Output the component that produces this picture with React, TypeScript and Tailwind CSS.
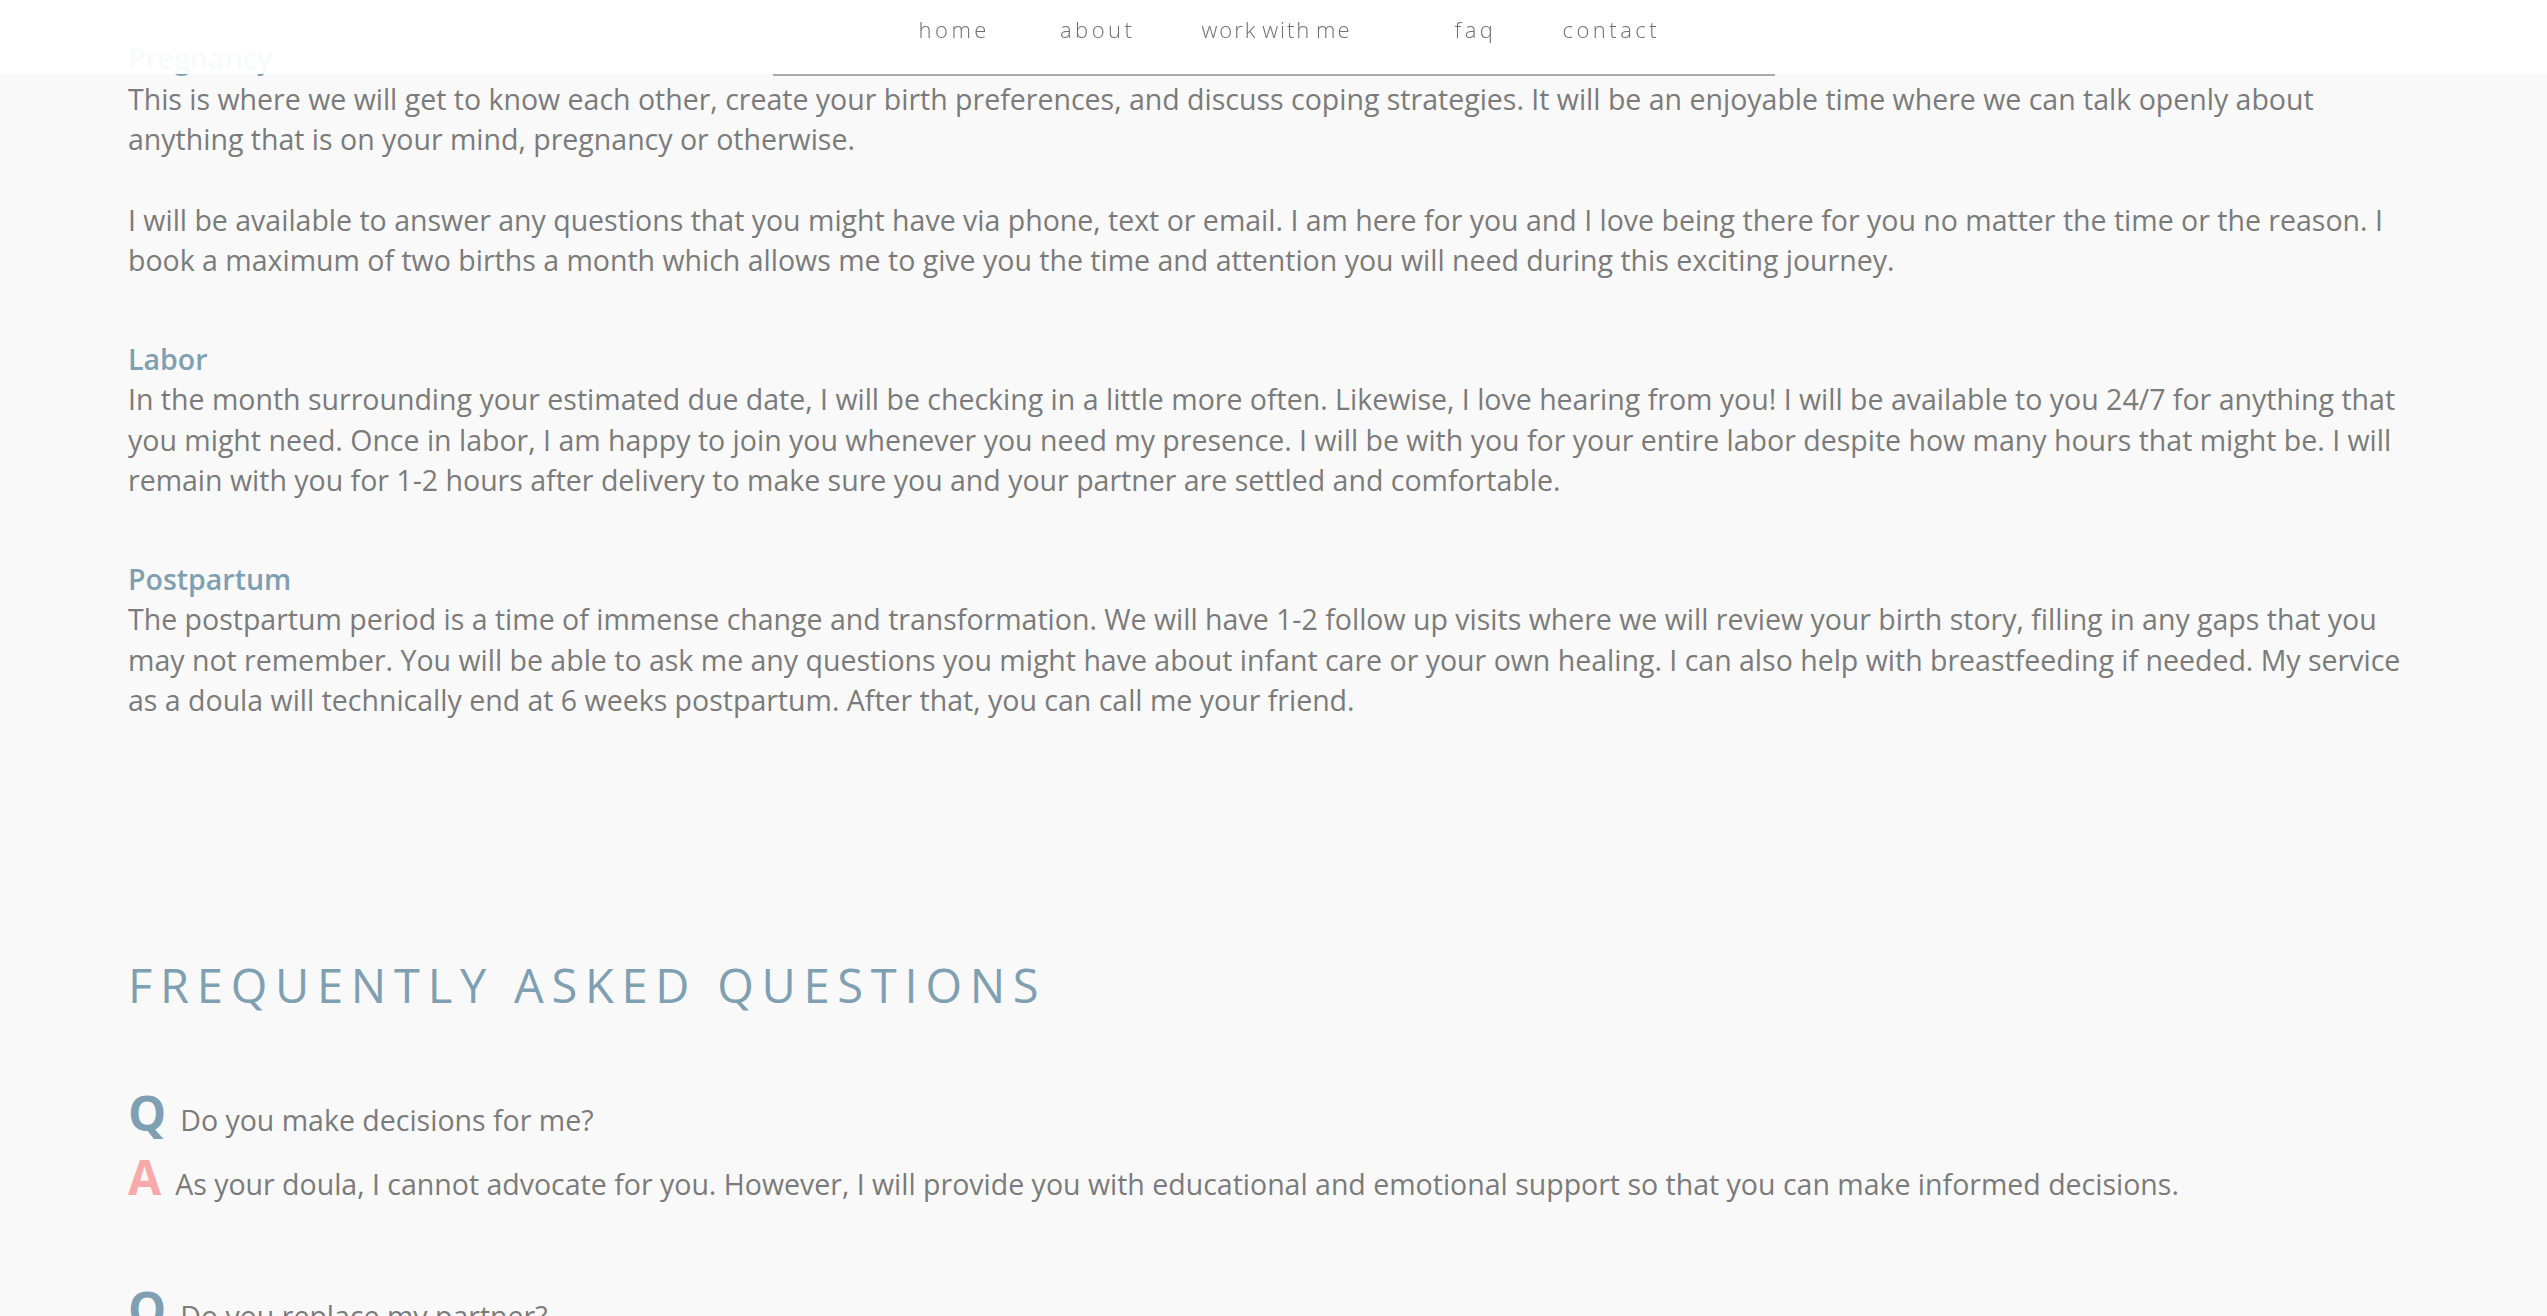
const sections = [
  {
    title: "Pregnancy",
    paragraphs: [
      "This is where we will get to know each other, create your birth preferences, and discuss coping strategies. It will be an enjoyable time where we can talk openly about anything that is on your mind, pregnancy or otherwise.",
      "I will be available to answer any questions that you might have via phone, text or email. I am here for you and I love being there for you no matter the time or the reason. I book a maximum of two births a month which allows me to give you the time and attention you will need during this exciting journey.",
    ],
  },
  {
    title: "Labor",
    paragraphs: [
      "In the month surrounding your estimated due date, I will be checking in a little more often. Likewise, I love hearing from you! I will be available to you 24/7 for anything that you might need. Once in labor, I am happy to join you whenever you need my presence. I will be with you for your entire labor despite how many hours that might be. I will remain with you for 1-2 hours after delivery to make sure you and your partner are settled and comfortable.",
    ],
  },
  {
    title: "Postpartum",
    paragraphs: [
      "The postpartum period is a time of immense change and transformation. We will have 1-2 follow up visits where we will review your birth story, filling in any gaps that you may not remember. You will be able to ask me any questions you might have about infant care or your own healing. I can also help with breastfeeding if needed. My service as a doula will technically end at 6 weeks postpartum. After that, you can call me your friend.",
    ],
  },
];

const faqs = [
  {
    q: "Do you make decisions for me?",
    a: "As your doula, I cannot advocate for you. However, I will provide you with educational and emotional support so that you can make informed decisions.",
  },
  {
    q: "Do you replace my partner?",
    a: "Not at all. I am there to support both of you, so your partner can be as involved as they would like to be.",
  },
];

function Header() {
  const link = "text-[22px] font-light leading-[34px] text-[#6f6f6f]";
  return (
    <header className="fixed inset-x-0 top-0 z-10 h-[74px] bg-white/95">
      <nav className="mx-auto flex h-[76px] w-[1002px] border-b-2 border-[#aaaaaa] pl-[146px] pt-[12px]">
        <a href="#" className={`${link} tracking-[3.5px]`}>home</a>
        <a href="#" className={`${link} ml-[70px] tracking-[3.5px]`}>about</a>
        <a href="#" className={`${link} ml-[66px] tracking-[2px] [word-spacing:-3px]`}>work with me</a>
        <a href="#" className={`${link} ml-[103px] tracking-[3.5px]`}>faq</a>
        <a href="#" className={`${link} ml-[66px] tracking-[3.5px]`}>contact</a>
      </nav>
    </header>
  );
}

export default function App() {
  return (
    <div className="min-h-screen bg-[#f9f9f9] font-['Open_Sans',sans-serif] text-[#7b7b7b]">
      <Header />
      <main className="px-[128px] pt-[38px] pb-[200px]">
        <div className="flex flex-col gap-[58px]">
          {sections.map((s) => (
            <section key={s.title} className="text-[28.5px] leading-[40.5px]">
              <h3 className="font-semibold text-[#7f9fb2]">{s.title}</h3>
              <div className="flex flex-col gap-[40px]">
                {s.paragraphs.map((p, i) => (
                  <p key={i}>{p}</p>
                ))}
              </div>
            </section>
          ))}
        </div>

        <h2 className="mt-[234px] text-[47px] font-normal leading-[60px] tracking-[0.165em] text-[#7f9fb2]">
          FREQUENTLY ASKED QUESTIONS
        </h2>

        <div className="mt-[70px] flex flex-col gap-[76px]">
          {faqs.map((f) => (
            <div key={f.q} className="flex flex-col gap-[8px]">
              <div className="flex items-baseline gap-[14px]">
                <span className="text-[48px] font-bold leading-[56px] text-[#7f9fb2]">Q</span>
                <span className="text-[28.5px] leading-[40px]">{f.q}</span>
              </div>
              <div className="flex items-baseline gap-[14px]">
                <span className="text-[48px] font-bold leading-[56px] text-[#f8a9aa]">A</span>
                <span className="text-[28.5px] leading-[40px]">{f.a}</span>
              </div>
            </div>
          ))}
        </div>
      </main>
    </div>
  );
}
